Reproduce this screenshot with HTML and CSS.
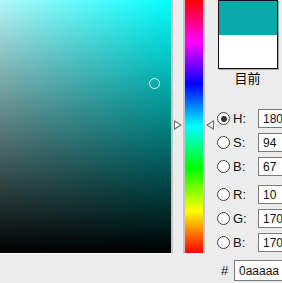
FILE: index.html
```html
<!DOCTYPE html>
<html>
<head>
<meta charset="utf-8">
<link rel="stylesheet" href="styles.css">
</head>
<body>

<div class="window">
  <div class="picker">
    <div class="field">
      <div class="field-dark"></div>
      <span class="marker"></span>
    </div>

    <div class="hue">
      <span class="arrow arrow-left"></span>
      <span class="arrow arrow-right"></span>
    </div>

    <div class="side">
      <div class="swatch">
        <div class="swatch-new"></div>
        <div class="swatch-old"></div>
      </div>
      <div class="swatch-label">目前</div>

      <div class="rows">
        <div class="row"><span class="radio checked"></span><span class="row-label">H:</span><input class="num" type="text" value="180"></div>
        <div class="row"><span class="radio"></span><span class="row-label">S:</span><input class="num" type="text" value="94"></div>
        <div class="row group-end"><span class="radio"></span><span class="row-label">B:</span><input class="num" type="text" value="67"></div>
        <div class="row"><span class="radio"></span><span class="row-label">R:</span><input class="num" type="text" value="10"></div>
        <div class="row"><span class="radio"></span><span class="row-label">G:</span><input class="num" type="text" value="170"></div>
        <div class="row"><span class="radio"></span><span class="row-label">B:</span><input class="num" type="text" value="170"></div>
      </div>
    </div>
  </div>

  <div class="hex-row">
    <span class="hash">#</span>
    <input class="hex" type="text" value="0aaaaa">
  </div>
</div>

</body>
</html>
```

FILE: styles.css
```css
html, body {
  margin: 0;
  padding: 0;
  background: #ececec;
}

.window {
  width: 282px;
  height: 283px;
  overflow: hidden;
  font-family: "Liberation Sans", Arial, "Noto Sans CJK SC", sans-serif;
  font-size: 13px;
  color: #111;
}

.picker {
  display: flex;
  align-items: flex-start;
  height: 254px;
}

/* saturation / brightness square */
.field {
  position: relative;
  flex: none;
  width: 171px;
  height: 253px;
  border-right: 2px solid #c4c4c4;
  border-bottom: 1px solid #fff;
  background: linear-gradient(to right, #b4f8f8, #00ffff);
}

.field-dark {
  height: 100%;
  background: linear-gradient(to bottom, rgba(0, 0, 0, 0), #000);
}

.marker {
  position: absolute;
  left: 149px;
  top: 78px;
  width: 9px;
  height: 9px;
  border: 1.5px solid #d4f4f4;
  border-radius: 50%;
}

/* hue strip */
.hue {
  position: relative;
  flex: none;
  margin-left: 10px;
  width: 18px;
  height: 253px;
  border-left: 2px solid #c4c4c4;
  border-right: 2px solid #c4c4c4;
  border-bottom: 1px solid #fff;
  background: linear-gradient(to bottom, #ff0000 0%, #ff00ff 16.7%, #0000ff 33.3%, #00ffff 50%, #00ff00 66.7%, #ffff00 83.3%, #ff0000 100%);
}

.arrow {
  position: absolute;
  top: 120px;
  width: 8px;
  height: 11px;
}

.arrow::before,
.arrow::after {
  content: '';
  position: absolute;
  top: 0;
  border-top: 5.5px solid transparent;
  border-bottom: 5.5px solid transparent;
}

.arrow-left {
  left: -11px;
}

.arrow-left::before {
  left: 0;
  border-left: 8px solid #6a6a6a;
}

.arrow-left::after {
  left: 1px;
  top: 2px;
  border-top-width: 3.5px;
  border-bottom-width: 3.5px;
  border-left: 5px solid #fff;
}

.arrow-right {
  left: 21px;
}

.arrow-right::before {
  right: 0;
  border-right: 8px solid #6a6a6a;
}

.arrow-right::after {
  right: 1px;
  top: 2px;
  border-top-width: 3.5px;
  border-bottom-width: 3.5px;
  border-right: 5px solid #fff;
}

/* right column */
.side {
  flex: none;
  margin-left: 12px;
  width: 110px;
}

.swatch {
  margin-left: 1px;
  width: 58px;
  height: 67px;
  border: 1px solid #111;
  box-shadow: 1px 1px 0 #a8a8a8;
}

.swatch-new {
  height: 34px;
  background: #0aaaaa;
}

.swatch-old {
  height: 33px;
  background: #fff;
}

.swatch-label {
  width: 61px;
  height: 18px;
  line-height: 18px;
  margin-top: 1px;
  text-align: center;
  font-size: 13px;
  color: #000;
}

.rows {
  margin-top: 21px;
}

.row {
  display: flex;
  align-items: center;
  height: 19px;
  margin-bottom: 5px;
}

.row.group-end {
  margin-bottom: 9px;
}

.row:last-child {
  margin-bottom: 0;
}

.radio {
  flex: none;
  position: relative;
  box-sizing: border-box;
  width: 13px;
  height: 13px;
  border: 1px solid #444;
  border-radius: 50%;
  background: #fff;
}

.radio.checked::after {
  content: '';
  position: absolute;
  left: 2.5px;
  top: 2.5px;
  width: 6px;
  height: 6px;
  border-radius: 50%;
  background: #333;
}

.row-label {
  flex: none;
  width: 25px;
  margin-left: 3px;
  font-size: 13px;
  color: #111;
}

.num,
.hex {
  box-sizing: border-box;
  margin: 0;
  padding: 0 0 0 4px;
  border: 1px solid #7a7a7a;
  background: #fff;
  font-family: "Liberation Sans", Arial, sans-serif;
  font-size: 12px;
  color: #111;
  outline: none;
}

.num {
  flex: none;
  width: 44px;
  height: 19px;
}

/* hex line under the picker */
.hex-row {
  display: flex;
  align-items: center;
  margin-top: 6px;
  padding-left: 221px;
}

.hash {
  flex: none;
  width: 13px;
  font-size: 13px;
}

.hex {
  flex: none;
  width: 60px;
  height: 21px;
}
```
